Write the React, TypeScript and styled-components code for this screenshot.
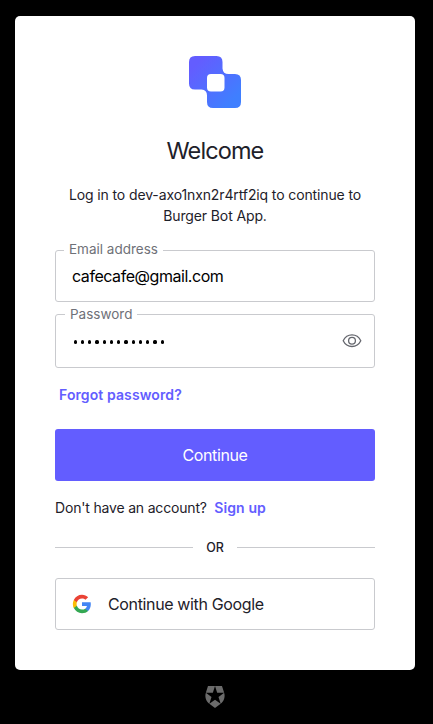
import React from 'react';
import styled, { createGlobalStyle } from 'styled-components';

const GlobalStyle = createGlobalStyle`
  *, *::before, *::after { box-sizing: border-box; }
  body {
    margin: 0;
    background: #000;
    font-family: Inter, "Liberation Sans", sans-serif;
    color: #1e212a;
  }
`;

const Page = styled.main`
  min-height: 724px;
  padding: 16px 18px 0 15px;
  display: flex;
  flex-direction: column;
  align-items: center;
`;

const Card = styled.section`
  width: 400px;
  height: 654px;
  padding: 40px 40px 0;
  background: #fff;
  border-radius: 5px;
  display: flex;
  flex-direction: column;
`;

const Logo = styled.svg`
  width: 52px;
  height: 52px;
  align-self: center;
  flex: none;
`;

const Title = styled.h1`
  margin: 28px 0 0;
  font-size: 23.5px;
  font-weight: 400;
  line-height: 30px;
  letter-spacing: -0.9px;
  text-align: center;
`;

const Description = styled.p`
  margin: 18px 0 0;
  font-size: 14px;
  line-height: 21px;
  letter-spacing: -0.12px;
  text-align: center;
`;

const Field = styled.div<{ $height: number; $gap: number }>`
  position: relative;
  height: ${(p) => p.$height}px;
  margin-top: ${(p) => p.$gap}px;
  padding: 0 12px 0 16px;
  border: 1px solid #c9cace;
  border-radius: 3px;
  display: flex;
  align-items: center;
  justify-content: space-between;
`;

const FieldLabel = styled.label<{ $top: number; $left: number }>`
  position: absolute;
  top: ${(p) => p.$top}px;
  left: ${(p) => p.$left}px;
  padding: 0 5px;
  background: #fff;
  color: #6f7178;
  font-size: 13.5px;
  line-height: 17px;
`;

const TextInput = styled.input`
  width: 100%;
  padding: 0;
  border: 0;
  outline: 0;
  background: transparent;
  color: #000;
  font: 400 16px/24px Inter, "Liberation Sans", sans-serif;
  letter-spacing: -0.45px;
`;

const MaskedValue = styled.div`
  display: flex;
  gap: 4px;
  padding: 2px 0 0 1.5px;
`;

const Dot = styled.span`
  width: 3.25px;
  height: 3.25px;
  border-radius: 50%;
  background: #000;
`;

const IconButton = styled.button`
  display: flex;
  padding: 0;
  border: 0;
  background: none;
  color: #65676e;
`;

const Link = styled.a`
  color: #635dff;
  font-size: 14px;
  font-weight: 600;
  line-height: 20px;
  letter-spacing: 0.1px;
  text-decoration: none;
`;

const ForgotRow = styled.div`
  height: 20px;
  margin: 17px 0 0 4px;
  display: flex;
`;

const PrimaryButton = styled.button`
  height: 52px;
  flex: none;
  margin-top: 24px;
  border: 0;
  border-radius: 3px;
  background: #635dff;
  color: #fff;
  font: 400 16px/24px Inter, "Liberation Sans", sans-serif;
  letter-spacing: -0.4px;
`;

const SignupRow = styled.p`
  margin: 17px 0 0;
  display: flex;
  gap: 7.5px;
  font-size: 14px;
  line-height: 20px;
  letter-spacing: -0.18px;
`;

const Divider = styled.div`
  height: 20px;
  margin-top: 19px;
  display: flex;
  align-items: center;
  gap: 13px;
  font-size: 12.5px;
  font-weight: 500;

  &::before, &::after {
    content: "";
    flex: 1;
    height: 1px;
    background: #c9cace;
  }
`;

const SocialButton = styled.button`
  height: 52px;
  flex: none;
  margin-top: 21px;
  padding: 0 16px;
  border: 1px solid #c9cace;
  border-radius: 3px;
  background: #fff;
  color: #1e212a;
  display: flex;
  align-items: center;
  gap: 16px;
  font: 400 16px/24px Inter, "Liberation Sans", sans-serif;
  letter-spacing: -0.36px;
`;

const Badge = styled.svg`
  width: 22px;
  height: 22px;
  margin-top: 16px;
`;

export default function App() {
  return (
    <>
      <GlobalStyle />
      <Page>
        <Card>
          <Logo viewBox="0 0 52 52" aria-hidden="true">
            <defs>
              <linearGradient id="brand" x1="0" y1="0" x2="1" y2="1">
                <stop offset="0.15" stopColor="#635dff" />
                <stop offset="0.85" stopColor="#3f7fff" />
              </linearGradient>
            </defs>
            <path
              fill="url(#brand)"
              fillRule="evenodd"
              d="M6 0H27.5Q33.5 0 33.5 6V12.5Q34 18 39.5 18H46Q52 18 52 24V46Q52 52 46 52H24Q18 52 18 46V39.5Q18 34 12.5 33.5H6Q0 33.5 0 27.5V6Q0 0 6 0ZM22 18Q18 18 18 22V31.5Q18 35.5 22 35.5H31.5Q35.5 35.5 35.5 31.5V22Q35.5 18 31.5 18Z"
            />
          </Logo>
          <Title>Welcome</Title>
          <Description>
            Log in to dev-axo1nxn2r4rtf2iq to continue to
            <br />
            Burger Bot App.
          </Description>
          <Field $height={52} $gap={24}>
            <FieldLabel $top={-10} $left={8} htmlFor="email">Email address</FieldLabel>
            <TextInput id="email" defaultValue="cafecafe@gmail.com" />
          </Field>
          <Field $height={54} $gap={12}>
            <FieldLabel $top={-9} $left={9}>Password</FieldLabel>
            <MaskedValue>
              {Array.from({ length: 13 }, (_, i) => <Dot key={i} />)}
            </MaskedValue>
            <IconButton aria-label="Show password">
              <svg width="20" height="16" viewBox="0 0 20 16" fill="none" stroke="currentColor" strokeWidth="1.3">
                <path d="M1.2 7.7C5 0 15 0 18.8 7.7C15 15.4 5 15.4 1.2 7.7Z" strokeLinejoin="round" />
                <circle cx="10" cy="7.7" r="3.4" />
              </svg>
            </IconButton>
          </Field>
          <ForgotRow>
            <Link href="#">Forgot password?</Link>
          </ForgotRow>
          <PrimaryButton>Continue</PrimaryButton>
          <SignupRow>
            Don't have an account? <Link href="#">Sign up</Link>
          </SignupRow>
          <Divider>OR</Divider>
          <SocialButton>
            <svg width="20" height="20" viewBox="0 0 48 48" aria-hidden="true">
              <path fill="#4285f4" d="M45.12 24.5c0-1.56-.14-3.06-.4-4.5H24v8.51h11.84c-.51 2.75-2.06 5.08-4.39 6.64v5.52h7.11c4.16-3.83 6.56-9.47 6.56-16.17z" />
              <path fill="#34a853" d="M24 46c5.94 0 10.92-1.97 14.56-5.33l-7.11-5.52c-1.97 1.32-4.49 2.1-7.45 2.1-5.73 0-10.58-3.87-12.31-9.07H4.34v5.7C7.96 41.07 15.4 46 24 46z" />
              <path fill="#fbbc05" d="M11.69 28.18C11.25 26.86 11 25.45 11 24s.25-2.86.69-4.18v-5.7H4.34A21.99 21.99 0 0 0 2 24c0 3.55.85 6.91 2.34 9.88l7.35-5.7z" />
              <path fill="#ea4335" d="M24 10.75c3.23 0 6.13 1.11 8.41 3.29l6.31-6.31C34.91 4.18 29.93 2 24 2 15.4 2 7.96 6.93 4.34 14.12l7.35 5.7c1.73-5.2 6.58-9.07 12.31-9.07z" />
            </svg>
            Continue with Google
          </SocialButton>
        </Card>
        <Badge viewBox="0 0 24 24" aria-hidden="true">
          <path
            fill="#6b6b6b"
            d="M21.98 7.448L19.62 0H4.347L2.02 7.448c-1.352 4.312.03 9.206 3.815 12.015L12.007 24l6.157-4.552c3.755-2.81 5.182-7.688 3.815-12.015l-6.16 4.58 2.343 7.45-6.157-4.597-6.158 4.58 2.358-7.433-6.188-4.55 7.63-.045L12.008 0l2.356 7.404 7.615.044z"
          />
        </Badge>
      </Page>
    </>
  );
}
